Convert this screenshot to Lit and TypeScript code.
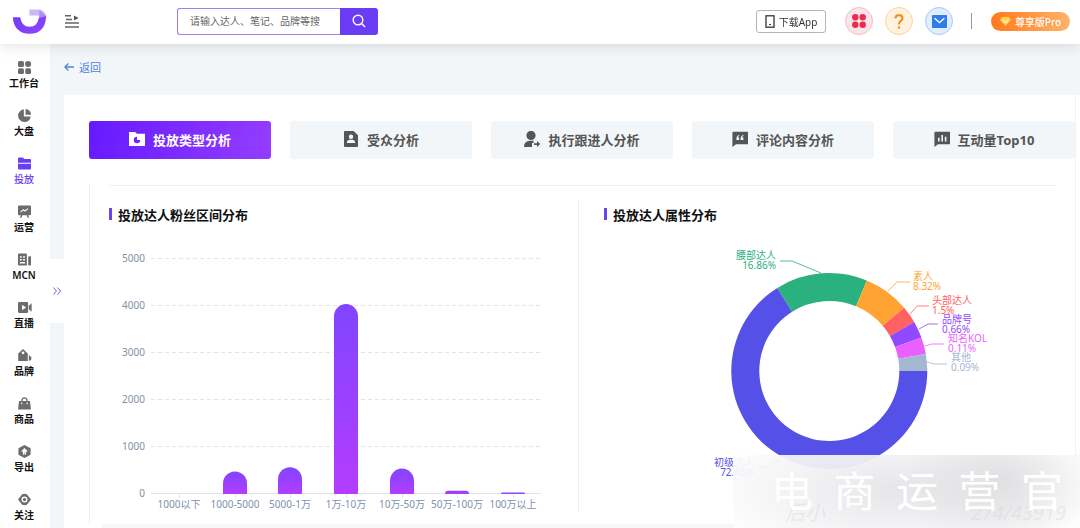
import { LitElement, html, svg, css } from 'lit';
import { customElement, property } from 'lit/decorators.js';

type Glyph = ReturnType<typeof svg>;

const NAV: { label: string; icon: Glyph; active?: boolean }[] = [
  { label: '工作台', icon: svg`<rect x="0" y="0" width="5.5" height="5.5" rx="1.4"/><circle cx="9.3" cy="2.8" r="2.8"/><rect x="0" y="6.8" width="5.5" height="5.2" rx="1.4"/><rect x="6.7" y="6.8" width="5.3" height="5.2" rx="1.4"/>` },
  { label: '大盘', icon: svg`<path d="M5.4.3A5.9 5.9 0 1 0 11.8 7H5.4z"/><path d="M7 0a5.3 5.3 0 0 1 5 5.4H7z"/>` },
  { label: '投放', active: true, icon: svg`<path d="M0 1.3Q0 .4 1 .4h3.4l1.4 1.4H11q1 0 1 1v2.4H0z"/><path d="M0 6.200h12v4.500q0 .9-1 .9H1q-1 0-1-.9z"/>` },
  { label: '运营', icon: svg`<path fill-rule="evenodd" d="M1 .5h10q1 0 1 1v7q0 1-1 1H9.4l.8 2.2H8.8L8 9.5H4l-.8 2.200H1.800l.8-2.200H1q-1 0-1-1v-7q0-1 1-1zM2.600 7l2.500-2 1.300 1.200L9.600 3.700 9 3 6.400 4.900 5.100 3.800 2.200 6z"/>` },
  { label: 'MCN', icon: svg`<path fill-rule="evenodd" d="M1 .5h6.3q.9 0 .9.9v10.1H1q-1 0-1-1v-9q0-1 1-1zM1.8 3v1.4h1.7V3zm2.900 0v1.400h1.700V3zM1.800 5.500V7h1.700V5.500zm2.900 0V7h1.700V5.500zM1.800 8.400v1.200h4.600V8.400z"/><rect x="9.4" y="3" width="2.6" height="8.5" rx=".8"/>` },
  { label: '直播', icon: svg`<path fill-rule="evenodd" d="M1 1h7.4q1 0 1 1v8q0 1-1 1H1q-1 0-1-1V2q0-1 1-1zm2.8 2.500v5L7.400 6z"/><path d="M10 4.400 12.600 2v8L10 7.600z"/>` },
  { label: '品牌', icon: svg`<path fill-rule="evenodd" d="M4.600 0 9 4.200V11H.2V4.200zm0 2.200a1.300 1.300 0 1 0 .01 2.600 1.300 1.300 0 0 0 0-2.600z"/><path d="m10 5.400 2.200 2.200V10L10 11z"/>` },
  { label: '商品', icon: svg`<path fill-rule="evenodd" d="M3 3.600a3 3.400 0 0 1 6 0h2l1 8H0l1-8zm1.200 0h3.600a1.800 2.200 0 0 0-3.600 0zM3 5v1.600h1V5zm5 0v1.600h1V5z"/>` },
  { label: '导出', icon: svg`<path fill-rule="evenodd" d="m6 0 5.600 3v6L6 12 .4 9V3zm0 2.800L2.800 6h1.600q-.3 2.400 1 3.400.4-1 .4-3.400H6q0 2.400.5 3.400 1.300-1 1.100-3.400h1.600z"/>` },
  { label: '关注', icon: svg`<path fill-rule="evenodd" d="M3.900 1.100q2.100-.7 4.200 0L12 6l-3.900 4.900q-2.100.7-4.200 0L0 6zM6 3.200a2.800 2.800 0 1 0 .01 5.600A2.800 2.800 0 0 0 6 3.200z"/><circle cx="6" cy="6" r="1.500"/>` },
];

const TABS: { label: string; icon: Glyph; active?: boolean }[] = [
  { label: '投放类型分析', active: true, icon: svg`<path fill-rule="evenodd" d="M0 1h6l2 1.800h8V15H0zm8 4.800a3.200 3.200 0 1 0 3.200 3.200H8z"/><path d="M9 5.400a3 3 0 0 1 2.800 2.700H9z"/>` },
  { label: '受众分析', icon: svg`<path fill-rule="evenodd" d="M2 0h8.600L15 4.200V15q0 1-1 1H2q-1 0-1-1V1q0-1 1-1zm6 3.600a2.200 2.200 0 1 0 .01 4.400A2.200 2.200 0 0 0 8 3.600zM3.800 12h8.400q-.2-3-2.800-3.200H6.600Q4 9 3.800 12z"/>` },
  { label: '执行跟进人分析', icon: svg`<circle cx="7" cy="4.400" r="4.600"/><path d="M0 16q0-6 6-6.200h3.600V12H8v4z"/><path d="M10 12.200h3V10l3.200 3-3.200 3v-2h-3z"/>` },
  { label: '评论内容分析', icon: svg`<path fill-rule="evenodd" d="M1 .8h15v12.400H4L.4 16V1.400zM4.400 9h2.800V6.400H6q0-1 1.200-1.300v-1Q4.200 4.400 4.400 9zm4.200 0h2.800V6.400h-1.200q0-1 1.200-1.300v-1Q8.400 4.400 8.600 9z"/>` },
  { label: '互动量Top10', icon: svg`<path fill-rule="evenodd" d="M1 .8h15v12.400H4L.4 16V1.400zM4 6.800V10.400h1.600V6.800zM7.400 4V10.400H9V4zM10.800 5.800V10.400h1.600V5.800z"/>` },
];

const BASE = 264;
const PER_THOUSAND = 47;

@customElement('bar-chart')
class BarChart extends LitElement {
  @property({ attribute: false }) rows: { name: string; value: number }[] = [
    { name: '1000以下', value: 0 },
    { name: '1000-5000', value: 480 },
    { name: '5000-1万', value: 570 },
    { name: '1万-10万', value: 4040 },
    { name: '10万-50万', value: 540 },
    { name: '50万-100万', value: 70 },
    { name: '100万以上', value: 30 },
  ];

  static styles = css`
    :host { display: block; }
    svg { display: block; width: 100%; height: auto; }
    text { font: 10px "Noto Sans", "Noto Sans CJK SC", sans-serif; fill: #8091a9; }
    .grid { stroke: #e3e4e8; stroke-dasharray: 4 3; }
    .axis { stroke: #e0e3ea; }
  `;

  private bar(value: number, cx: number) {
    const h = (value / 1000) * PER_THOUSAND;
    if (!h) return null;
    const r = Math.min(12, h);
    const top = BASE - h;
    return svg`<path fill="url(#bar)" d="M${cx - 12} ${BASE}V${top + r}a${r} ${r} 0 0 1 ${r} ${-r}H${cx + 12 - r}a${r} ${r} 0 0 1 ${r} ${r}V${BASE}z"/>`;
  }

  render() {
    const step = 390 / this.rows.length;
    return html`<svg viewBox="0 0 469 282" role="img" aria-label="投放达人粉丝区间分布">
      <defs><linearGradient id="bar" x1="0" y1="0" x2="0" y2="1">
        <stop offset="0" stop-color="#8045ff"/><stop offset="1" stop-color="#b53cff"/>
      </linearGradient></defs>
      ${[0, 1, 2, 3, 4, 5].map((n) => {
        const y = Math.round(BASE - n * PER_THOUSAND) - 0.5;
        return svg`<line class=${n ? 'grid' : 'axis'} x1="42" x2="432" y1=${y} y2=${y}/>
          <text x="36" y=${y + 3} text-anchor="end">${n * 1000}</text>`;
      })}
      ${this.rows.map((r, i) => {
        const cx = Math.round(42 + step * (i + 0.5));
        return svg`<line class="axis" x1=${cx + 0.5} x2=${cx + 0.5} y1=${BASE} y2=${BASE + 4}/>
          ${this.bar(r.value, cx)}
          <text x=${cx} y="278" text-anchor="middle">${r.name}</text>`;
      })}
    </svg>`;
  }
}

interface Slice {
  name: string; share: string; color: string;
  from: number; to: number;
  x: number; y: number; end?: boolean; lead: string;
}

/* Angles are degrees counter-clockwise from the right-hand side. */
const SLICES: Slice[] = [
  { name: '初级达人', share: '72.46%', color: '#5551e8', from: 122, to: 360, x: 175, y: 236, end: true, lead: '179,237 191,237 201,229' },
  { name: '腰部达人', share: '16.86%', color: '#2bb080', from: 67.5, to: 122, x: 197, y: 29, end: true, lead: '201,31 213,31 242,43' },
  { name: '素人', share: '8.32%', color: '#ffa433', from: 40.2, to: 67.5, x: 334, y: 50, lead: '309,61 318,52 331,52' },
  { name: '头部达人', share: '1.5%', color: '#ff6161', from: 30, to: 40.2, x: 353, y: 74, lead: '331,84 338,76 350,76' },
  { name: '品牌号', share: '0.66%', color: '#9148ff', from: 20, to: 30, x: 363, y: 93, lead: '340,99 349,94 359,94' },
  { name: '知名KOL', share: '0.11%', color: '#e95fff', from: 10, to: 20, x: 369, y: 112, lead: '346,116 353,114 365,114' },
  { name: '其他', share: '0.09%', color: '#a3b8d0', from: 0, to: 10, x: 372, y: 131, lead: '348,132 355,134 368,134' },
];

@customElement('donut-chart')
class DonutChart extends LitElement {
  static styles = css`
    :host { display: block; }
    svg { display: block; width: 100%; height: auto; }
    text { font: 10px "Noto Sans", "Noto Sans CJK SC", sans-serif; }
    polyline { fill: none; stroke-opacity: .8; }
  `;

  private arc(s: Slice) {
    const p = (deg: number, r: number) => {
      const a = (deg * Math.PI) / 180;
      return `${(250.3 + r * Math.cos(a)).toFixed(2)} ${(141 - r * Math.sin(a)).toFixed(2)}`;
    };
    const big = s.to - s.from > 180 ? 1 : 0;
    return `M${p(s.from, 98)}A98 98 0 ${big} 0 ${p(s.to, 98)}L${p(s.to, 70)}A70 70 0 ${big} 1 ${p(s.from, 70)}z`;
  }

  render() {
    return html`<svg viewBox="0 0 477 282" role="img" aria-label="投放达人属性分布">
      ${SLICES.map((s) => svg`
        <path d=${this.arc(s)} fill=${s.color}/>
        <polyline points=${s.lead} stroke=${s.color}/>
        <text fill=${s.color} text-anchor=${s.end ? 'end' : 'start'}>
          <tspan x=${s.x} y=${s.y}>${s.name}</tspan><tspan x=${s.x} y=${s.y + 10}>${s.share}</tspan>
        </text>`)}
    </svg>`;
  }
}

@customElement('app-root')
class AppRoot extends LitElement {
  static styles = css`
    :host {
      display: flex; flex-direction: column; position: relative;
      height: 100vh; overflow: hidden; background: #f2f6f9; color: #111;
      font-family: "Noto Sans", "Noto Sans CJK SC", sans-serif; font-size: 10px;
    }
    * { box-sizing: border-box; }
    button, input { font: inherit; margin: 0; }
    button { cursor: pointer; }
    a { text-decoration: none; color: inherit; }
    svg { display: block; flex: none; }

    header {
      display: flex; align-items: center; flex: none; height: 44px;
      padding: 0 10px 2px 12px; background: #fff; z-index: 2;
      box-shadow: 0 2px 14px rgba(40, 50, 60, .14);
    }
    .fold { margin-left: 18px; padding: 0; border: 0; background: none; }
    .search { display: flex; width: 201px; height: 27px; margin-left: 98px; }
    .search input {
      flex: 1; min-width: 0; padding: 0 12px; outline: 0; background: #fff; color: #444;
      border: 1px solid #9d80ef; border-right: 0; border-radius: 3px 0 0 3px;
    }
    .search input::placeholder { color: #666; opacity: 1; }
    .search button {
      display: grid; place-items: center; width: 38px; padding: 0;
      border: 0; border-radius: 0 3px 3px 0; background: #6a3df5;
    }
    .tools { display: flex; align-items: center; margin-left: auto; }
    .download {
      display: flex; align-items: center; justify-content: center; gap: 4px;
      width: 70px; height: 23px; margin-right: 19px; padding: 0;
      border: 1px solid #b5b5b5; border-radius: 3px; background: #fff; color: #333;
    }
    .round {
      display: grid; place-items: center; width: 28px; height: 28px; margin-right: 12px;
      padding: 0; border: 1px solid; border-radius: 50%;
    }
    .red { background: #fde4e8; border-color: #f7b9c3; }
    .amber { background: #fff3e0; border-color: #f9d3a0; }
    .blue { background: #e0eeff; border-color: #a9c9f8; }
    .rule { width: 1px; height: 16px; margin: 0 19px 0 6px; background: #999; }
    .pro {
      display: flex; align-items: center; justify-content: center; gap: 4px;
      width: 79px; height: 19px; padding: 0; border: 0; border-radius: 10px; color: #fff;
      font-weight: 500; background: linear-gradient(90deg, #ff7a1c, #ffb36b);
    }

    .body { display: flex; flex: 1; min-height: 0; }
    nav {
      flex: none; width: 50px; padding-top: 8px; background: #fff;
      overflow-y: auto; scrollbar-width: none;
    }
    .item {
      display: flex; flex-direction: column; align-items: center; gap: 1px;
      height: 48px; padding-top: 9px; margin-right: 2px;
      font-weight: 600; line-height: 16px; color: #111;
    }
    .item svg { fill: #6c6c6c; overflow: visible; }
    .item.on { color: #6a3df5; font-weight: 500; }
    .item.on svg { fill: #6a3df5; }

    .expand {
      position: absolute; left: 50px; top: 259px; width: 14px; height: 64px;
      display: grid; place-items: center; padding: 0; border: 0; background: #fff;
    }
    main { flex: 1; min-width: 0; padding-left: 14px; }
    .back {
      display: flex; align-items: center; gap: 5px; height: 51px; padding-bottom: 6px;
      font-size: 11px; color: #4c84dc;
    }
    .card { background: #fff; padding-right: 4px; }
    .inner { padding: 26px 0 0 25px; border-right: 1px solid #f1f2f4; }
    .tabs { display: grid; grid-template-columns: repeat(5, 1fr); gap: 19px; }
    .tab {
      display: flex; align-items: center; justify-content: center; gap: 8px;
      height: 38px; padding: 0 0 2px; border: 0; border-radius: 3px;
      background: #f2f6f9; color: #555; font-size: 13px; font-weight: 700; white-space: nowrap;
    }
    .tab svg { fill: currentColor; }
    .tab.on { color: #fff; background: linear-gradient(100deg, #661aff, #943dff); }
    .panel { margin-top: 25px; padding: 1px 19px 12px; border-left: 1px solid #eeeff2; }
    .charts {
      display: grid; grid-template-columns: 470fr 477fr;
      border-top: 1px solid #f1f1f4;
    }
    .chart { margin-top: 14px; min-width: 0; }
    .chart + .chart h2 { padding-left: 25px; }
    .left { border-right: 1px solid #eeeff2; }
    h2 {
      display: flex; align-items: center; gap: 6px; height: 28px; margin: 0 0 2px;
      font-size: 13px; font-weight: 700; color: #111;
    }
    h2::before { content: ""; width: 3px; height: 12px; background: #6a46e8; }
    .next { height: 8px; margin: 0 4px 0 38px; background: #f6f7f8; border-radius: 4px 4px 0 0; }

    .mark {
      position: absolute; right: 0; bottom: 0; z-index: 3; width: 347px; height: 73px;
      pointer-events: none; color: #fff;
      background:
        radial-gradient(ellipse 100px 66px at 267px 26px, rgba(216, 216, 219, .7), rgba(216, 216, 219, 0)),
        radial-gradient(ellipse 190px 66px at 165px 36px, rgba(222, 222, 225, .75), rgba(222, 222, 225, 0)),
        rgba(253, 253, 254, .92);
    }
    .words {
      position: relative; display: flex; justify-content: space-between; padding: 6px 17px 0 38px;
      font-size: 42px; line-height: 60px; font-weight: 400;
    }
    .code {
      position: absolute; left: 52px; right: 14px; bottom: 2px; display: flex;
      justify-content: space-between; font-size: 20px; line-height: 26px;
      font-style: italic; color: rgba(200, 200, 205, .28);
    }
  `;

  render() {
    return html`
      <header>
        <svg width="35" height="27" viewBox="0 0 35 27" aria-label="logo" role="img">
          <defs><linearGradient id="lg" x1="0" y1="0" x2="1" y2="1">
            <stop offset="0" stop-color="#6f3cf5"/><stop offset="1" stop-color="#9145ff"/>
          </linearGradient></defs>
          <path fill="url(#lg)" d="M.8 9.2h7.400q1.200 9.600 9.400 9.600 7.600 0 9.400-9.400l7.200-1.600Q33.400 25.800 17.600 25.800 2 25.400.8 9.200z"/>
          <path fill="#cdb6fb" d="M17.400 1.400h9q6 .4 7.800 6.400l-7.400 2V7.600h-9.400z"/>
          <path fill="#9c6df5" d="m27.400 2 6.800 6-6.800 2z" opacity=".6"/>
        </svg>
        <button class="fold" aria-label="收起菜单">
          <svg width="14" height="14" viewBox="0 0 14 14" fill="none" stroke="#666" stroke-width="1.400">
            <path d="M0 1.700h6M1 5.500h6M0 9h14M0 13h14"/><path d="M9 1.500v5l4.500-2.500z" fill="#555" stroke="none"/>
          </svg>
        </button>
        <form class="search" role="search" @submit=${(e: Event) => e.preventDefault()}>
          <input type="text" aria-label="搜索" placeholder="请输入达人、笔记、品牌等搜" />
          <button aria-label="搜索">
            <svg width="14" height="14" viewBox="0 0 14 14" fill="none" stroke="#fff" stroke-width="1.400">
              <circle cx="6" cy="6" r="4.800"/><path d="m9.500 9.500 3.600 3.600"/>
            </svg>
          </button>
        </form>
        <div class="tools">
          <button class="download">
            <svg width="10" height="13" viewBox="0 0 10 13"><rect x="1" y=".8" width="8" height="11.400" fill="none" stroke="#333" stroke-width="1.300"/><path d="M4 9.600h2" stroke="#333"/></svg>
            <span>下载App</span>
          </button>
          <button class="round red" aria-label="应用">
            <svg width="14" height="14" viewBox="0 0 14 14" fill="#ea2c4c"><circle cx="3.300" cy="3.300" r="3.200"/><circle cx="10.700" cy="3.300" r="3.200"/><circle cx="3.300" cy="10.700" r="3.200"/><circle cx="10.700" cy="10.700" r="3.200"/></svg>
          </button>
          <button class="round amber" aria-label="帮助">
            <svg width="10" height="15" viewBox="0 0 10 15" fill="none" stroke="#f0931f" stroke-width="2.200"><path d="M1.400 4.400Q1.600 1.200 5 1.200t3.500 3q0 1.800-2 3Q5 8.200 5 10.400"/><path d="M5 12.300v2.400"/></svg>
          </button>
          <button class="round blue" aria-label="消息">
            <svg width="15" height="13" viewBox="0 0 15 13"><rect width="15" height="13" rx=".8" fill="#2e7cee"/><path d="M2.600 3.200 7.500 7.600l4.900-4.400" fill="none" stroke="#fff" stroke-width="1.300"/></svg>
          </button>
          <span class="rule"></span>
          <button class="pro">
            <svg width="11" height="9" viewBox="0 0 11 9"><path d="M2.400 0h6.200L11 3 5.500 9 0 3z" fill="#ffd34d"/><path d="M3 3.200 5.500 5.800 8 3.200" fill="none" stroke="#fff"/></svg>
            <span>尊享版Pro</span>
          </button>
        </div>
      </header>
      <div class="body">
        <nav>
          ${NAV.map((n) => html`<a class="item ${n.active ? 'on' : ''}" href="#">
            <svg width="13" height="13" viewBox="0 0 12 12">${n.icon}</svg><span>${n.label}</span></a>`)}
        </nav>
        <main>
          <a class="back" href="#">
            <svg width="10" height="8" viewBox="0 0 10 8" fill="none" stroke="currentColor" stroke-width="1.300"><path d="M10 4H1M4.400.5.900 4l3.500 3.500"/></svg>
            <span>返回</span>
          </a>
          <div class="card">
            <div class="inner">
              <div class="tabs" role="tablist">
                ${TABS.map((t) => html`<button class="tab ${t.active ? 'on' : ''}" role="tab" aria-selected=${t.active ? 'true' : 'false'}>
                  <svg width="16" height="16" viewBox="0 0 16 16">${t.icon}</svg><span>${t.label}</span></button>`)}
              </div>
              <div class="panel">
                <div class="charts">
                  <section class="chart left"><h2>投放达人粉丝区间分布</h2><bar-chart></bar-chart></section>
                  <section class="chart"><h2>投放达人属性分布</h2><donut-chart></donut-chart></section>
                </div>
              </div>
            </div>
            <div class="next"></div>
          </div>
        </main>
      </div>
      <button class="expand" aria-label="展开">
        <svg width="8" height="8" viewBox="0 0 8 8" fill="none" stroke="#7a5ae6"><path d="m.5.500 3 3.500-3 3.500M4.500.500l3 3.500-3 3.500"/></svg>
      </button>
      <div class="mark">
        <div class="code"><span>后小</span><span>274/43919</span></div>
        <div class="words">${[...'电商运营官'].map((c) => html`<span>${c}</span>`)}</div>
      </div>
    `;
  }
}
